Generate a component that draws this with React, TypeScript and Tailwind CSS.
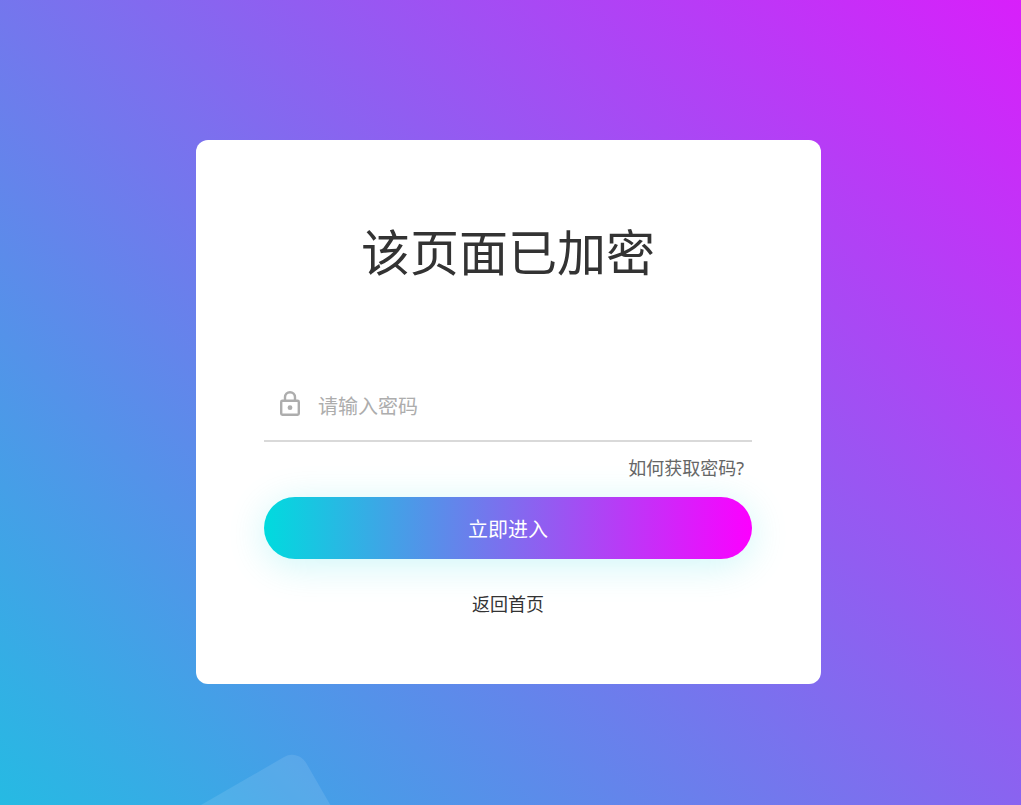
function LockIcon({ className }: { className?: string }) {
  return (
    <svg
      viewBox="0 0 20 25"
      fill="none"
      stroke="currentColor"
      strokeWidth="2.4"
      aria-hidden="true"
      className={className}
    >
      <rect x="1.2" y="9.7" width="17.6" height="14" rx="1.2" />
      <path d="M5 9.7V6.2a5 5 0 0 1 10 0v3.5" />
      <circle cx="10" cy="16.7" r="2.4" fill="currentColor" stroke="none" />
    </svg>
  );
}

export default function App() {
  return (
    <div className="relative flex min-h-screen items-center justify-center overflow-hidden bg-[linear-gradient(45deg,#00dbde_-21%,#fc00ff_120%)] pr-1 pt-[18px] font-['Noto_Sans','Noto_Sans_CJK_SC',sans-serif]">
      {/* Background decoration */}
      <div className="absolute -bottom-24 left-[146px] size-38 origin-top-right -rotate-30 rounded-2xl bg-white/10" />

      <main className="relative w-full max-w-[625px] rounded-xl bg-white pb-[66px] pl-[68px] pr-[69px] pt-[76px]">
        <form onSubmit={(e) => e.preventDefault()}>
          <h1 className="text-center text-[49px] leading-[72px] text-[#333333]">
            该页面已加密
          </h1>

          <div className="mt-20 flex h-[74px] items-center border-b-2 border-[#d9d9d9] pl-4">
            <LockIcon className="h-[25px] w-5 shrink-0 text-[#adadad]" />
            <input
              type="password"
              aria-label="密码"
              placeholder="请输入密码"
              className="ml-[18px] h-full w-full bg-transparent pt-1.5 text-xl text-[#333333] outline-none placeholder:text-[#adadad]"
            />
          </div>

          <div className="mt-3 pr-2 text-right">
            <a href="#" className="block text-lg leading-7 text-[#666666]">
              如何获取密码?
            </a>
          </div>

          <button
            type="submit"
            className="mt-[15px] h-[62px] w-full cursor-pointer rounded-full bg-[linear-gradient(90deg,#00dbde,#fc00ff)] pt-1 text-xl text-white shadow-[0_6px_38px_rgba(3,216,222,0.2)]"
          >
            立即进入
          </button>

          <div className="mt-[31px] text-center">
            <a href="#" className="text-lg leading-7 text-[#333333]">
              返回首页
            </a>
          </div>
        </form>
      </main>
    </div>
  );
}
